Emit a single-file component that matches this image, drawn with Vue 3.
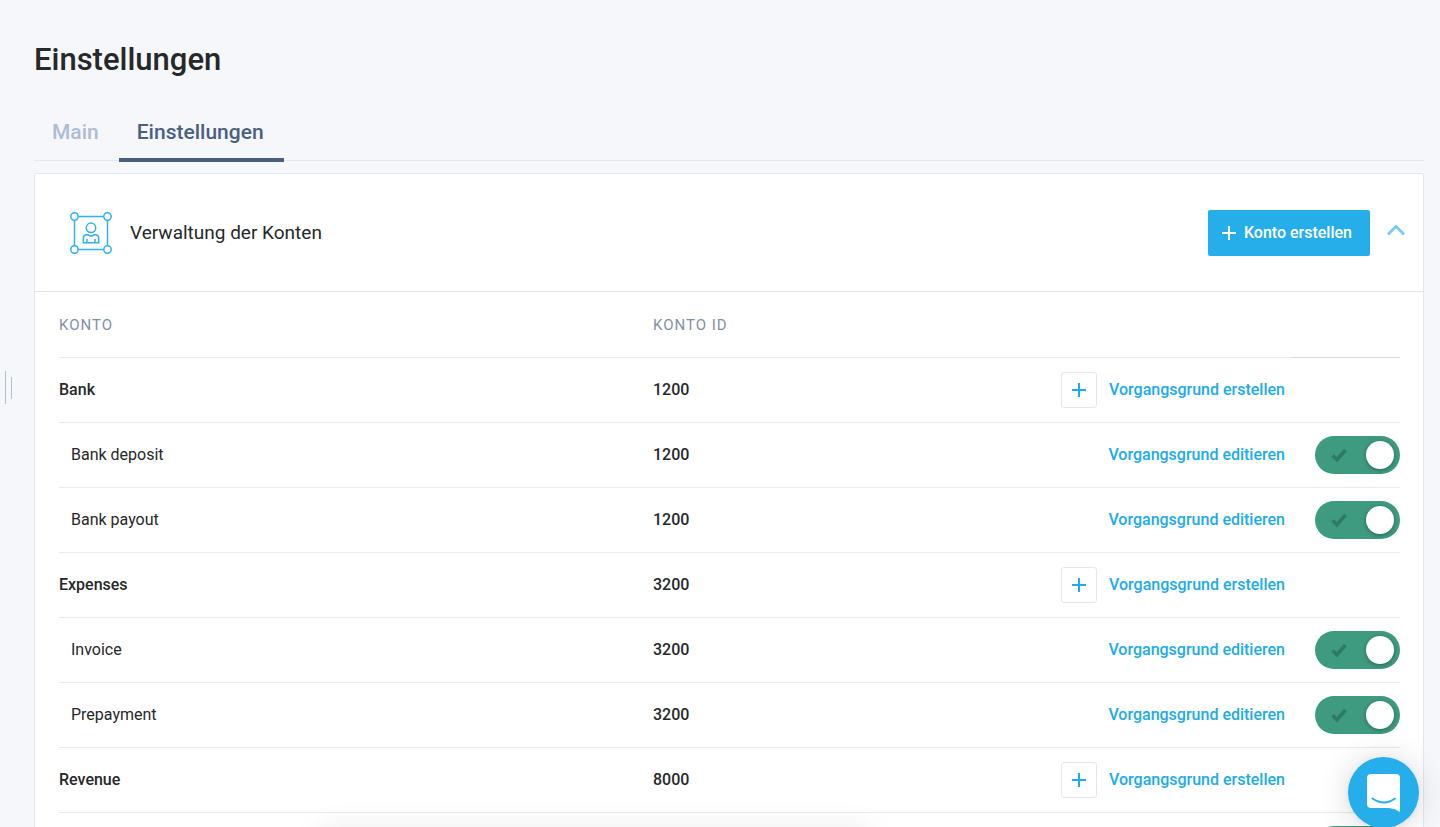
<script setup>
import { ref } from 'vue'

const open = ref(true)
const rows = ref([
  { name: 'Bank', id: '1200', group: true },
  { name: 'Bank deposit', id: '1200', active: true },
  { name: 'Bank payout', id: '1200', active: true },
  { name: 'Expenses', id: '3200', group: true },
  { name: 'Invoice', id: '3200', active: true },
  { name: 'Prepayment', id: '3200', active: true },
  { name: 'Revenue', id: '8000', group: true },
  { name: '', id: '', active: true },
])
</script>

<template>
  <div class="page">
    <button class="handle" type="button" aria-label="Menü"><span></span><span></span></button>

    <h1>Einstellungen</h1>

    <nav class="tabs">
      <a href="#main" class="tab">Main</a>
      <a href="#settings" class="tab current" aria-current="page">Einstellungen</a>
    </nav>

    <section class="card">
      <header class="card-head">
        <svg class="frame-icon" viewBox="0 0 42 42" fill="none" stroke="#2cb2ee" stroke-width="1.5" aria-hidden="true">
          <path d="M8.500 4.500H33.500M8.500 37.500H33.500M4.500 8.500V33.500M37.500 8.500V33.500" />
          <circle cx="4.500" cy="4.500" r="3.700" />
          <circle cx="37.500" cy="4.500" r="3.700" />
          <circle cx="4.500" cy="37.500" r="3.700" />
          <circle cx="37.500" cy="37.500" r="3.700" />
          <circle cx="21" cy="15.800" r="4.700" />
          <path d="M13.300 30.800V26.500Q13.300 22.800 17 22.800H18Q21 25 24 22.800H25Q28.700 22.800 28.700 26.500V30.800ZM17 30.800V27M25 30.800V27" />
        </svg>
        <h2>Verwaltung der Konten</h2>
        <button class="create" type="button">
          <svg viewBox="0 0 14 14" aria-hidden="true"><path d="M7 0V14M0 7H14" stroke="#fff" stroke-width="2" /></svg>
          Konto erstellen
        </button>
        <button class="collapse" type="button" aria-label="Einklappen" :aria-expanded="open" @click="open = !open">
          <svg viewBox="0 0 18 12" aria-hidden="true"><path d="M1 10.500L9 2.300L17 10.500" fill="none" stroke="#75c8f5" stroke-width="2.600" /></svg>
        </button>
      </header>

      <div v-if="open" class="card-body">
        <table>
          <thead>
            <tr>
              <th class="c-name" scope="col">Konto</th>
              <th class="c-id" scope="col">Konto ID</th>
              <th class="c-link"></th>
              <th class="c-switch"></th>
            </tr>
          </thead>
          <tbody>
            <tr v-for="(row, i) in rows" :key="i" :class="{ group: row.group }">
              <td class="c-name">{{ row.name }}</td>
              <td class="c-id">{{ row.id }}</td>
              <td class="c-link">
                <div v-if="row.name" class="action">
                  <button v-if="row.group" class="add" type="button" :aria-label="row.name + ': Vorgangsgrund erstellen'">
                    <svg viewBox="0 0 14 14" aria-hidden="true"><path d="M7 0V14M0 7H14" stroke="#1cabeb" stroke-width="2" /></svg>
                  </button>
                  <a href="#reason">Vorgangsgrund {{ row.group ? 'erstellen' : 'editieren' }}</a>
                </div>
              </td>
              <td class="c-switch">
                <label v-if="!row.group" class="switch">
                  <input v-model="row.active" type="checkbox" :aria-label="row.name || 'Aktiv'" />
                  <svg viewBox="0 0 16 14" aria-hidden="true"><path d="M1.500 7.500L6 11.800L14.500 2" fill="none" stroke="#2f7a62" stroke-width="3.600" /></svg>
                  <span class="knob"></span>
                </label>
              </td>
            </tr>
          </tbody>
        </table>
      </div>
    </section>

    <div class="bottom-shade"></div>
    <button class="chat" type="button" aria-label="Chat">
      <svg viewBox="0 0 34 38" aria-hidden="true">
        <path d="M4 0H29Q33 0 33 4V38Q28 34.500 22 34H4Q0 34 0 30V4Q0 0 4 0Z" fill="#fff" />
        <path d="M5.500 24.500Q17 32.500 28 24.500" fill="none" stroke="#25aeea" stroke-width="2" stroke-linecap="round" />
      </svg>
    </button>
  </div>
</template>

<style>
body {
  background: #f5f7fb;
  overflow: hidden;
}
</style>

<style scoped>
.page {
  box-sizing: border-box;
  height: 100vh;
  overflow: hidden;
  position: relative;
  padding: 40px 16px 0 34px;
  background: #f5f7fb;
  color: #262829;
  font: 16px/24px Roboto, sans-serif;
}
button {
  font: inherit;
  padding: 0;
  border: 0;
  background: none;
  cursor: pointer;
}
a {
  text-decoration: none;
}
h1 {
  margin: 0;
  font-size: 31px;
  line-height: 40px;
  font-weight: 500;
}
.handle {
  position: absolute;
  left: 5px;
  top: 371px;
  display: flex;
  align-items: center;
  gap: 5px;
}
.handle span {
  width: 1px;
  height: 33px;
  background: #b1bdd2;
}
.handle span + span {
  height: 22px;
}
.tabs {
  display: flex;
  margin-top: 24px;
  height: 56px;
  border-bottom: 1px solid #e5e8ef;
}
.tab {
  padding: 16px 20px 0 18px;
  height: 38px;
  font-size: 21px;
  line-height: 24px;
  font-weight: 500;
  color: #adbdd3;
}
.tab.current {
  border-bottom: 4px solid #4b5f83;
  color: #4b5f83;
}
.card {
  margin-top: 12px;
  border: 1px solid #e2e7f0;
  border-radius: 2px;
  background: #fff;
}
.card-head {
  display: flex;
  align-items: center;
  height: 117px;
  padding: 0 18px 0 35px;
  border-bottom: 1px solid #dfe6f0;
}
.frame-icon {
  width: 42px;
  height: 42px;
}
h2 {
  margin: 0 auto 0 18px;
  font-size: 19px;
  font-weight: 400;
}
.create {
  display: flex;
  align-items: center;
  gap: 8px;
  height: 46px;
  padding: 0 18px 0 14px;
  border-radius: 2px;
  background: #25aeea;
  color: #fff;
  font-weight: 500;
}
.create svg,
.add svg {
  width: 14px;
  height: 14px;
}
.collapse {
  display: flex;
  margin-left: 17px;
  padding-bottom: 6px;
}
.collapse svg {
  width: 18px;
  height: 12px;
}
.card-body {
  padding: 0 23px 24px 24px;
}
table {
  width: 100%;
  table-layout: fixed;
  border-collapse: separate;
  border-spacing: 0;
}
th,
td {
  box-sizing: border-box;
  height: 65px;
  padding: 0;
  border-bottom: 1px solid #e9eaec;
  text-align: left;
}
th {
  height: 66px;
  font-size: 15px;
  font-weight: 400;
  text-transform: uppercase;
  letter-spacing: 1px;
  color: #8190a6;
}
th.c-switch {
  border-color: #d9dbde;
}
.c-id {
  width: 22%;
}
.c-link {
  width: 343px;
}
.c-switch {
  width: 109px;
}
td.c-name {
  padding-left: 12px;
}
.group td.c-name {
  padding-left: 0;
  font-weight: 500;
}
td.c-id {
  font-weight: 500;
}
.action {
  display: flex;
  align-items: center;
  justify-content: flex-end;
  gap: 12px;
  padding-right: 6px;
}
.action a {
  color: #1cabeb;
  font-weight: 500;
}
.add {
  box-sizing: border-box;
  display: grid;
  place-items: center;
  width: 36px;
  height: 36px;
  border: 1px solid #e3e8f0;
  border-radius: 3px;
}
.switch {
  box-sizing: border-box;
  display: flex;
  align-items: center;
  justify-content: space-between;
  width: 85px;
  height: 38px;
  margin-left: auto;
  padding: 0 6px 0 16px;
  border-radius: 19px;
  background: #a9b3bd;
  position: relative;
}
.switch:has(input:checked) {
  background: #3e9b80;
}
.switch input {
  position: absolute;
  inset: 0;
  width: 100%;
  height: 100%;
  margin: 0;
  opacity: 0;
}
.switch svg {
  width: 16px;
  height: 14px;
}
.knob {
  width: 28px;
  height: 28px;
  border-radius: 50%;
  background: #fff;
  box-shadow: 0 1px 4px rgba(0, 0, 0, 0.35);
}
.bottom-shade {
  position: absolute;
  left: 320px;
  right: 570px;
  top: 100%;
  height: 20px;
  box-shadow: 0 4px 32px rgba(0, 0, 0, 0.1);
}
.chat {
  position: absolute;
  right: 21px;
  bottom: -1px;
  display: grid;
  place-items: center;
  width: 71px;
  height: 71px;
  border-radius: 50%;
  background: #25aeea;
  box-shadow: 0 1px 6px rgba(0, 0, 0, 0.06), 0 2px 32px rgba(0, 0, 0, 0.16);
}
.chat svg {
  width: 34px;
  height: 38px;
}
</style>
